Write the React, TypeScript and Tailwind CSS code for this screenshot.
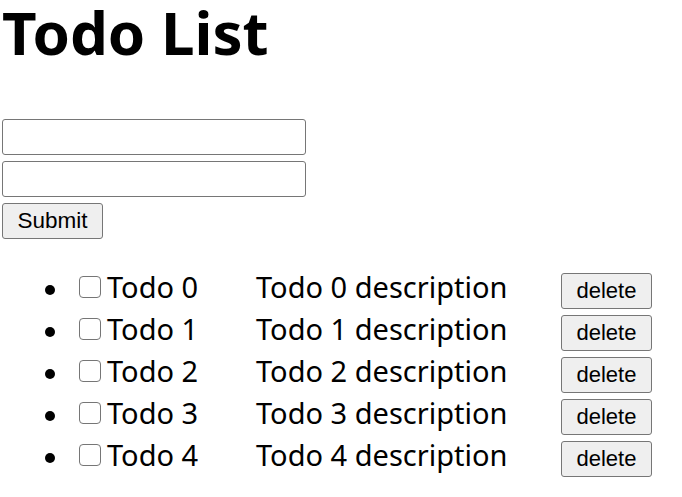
import { useState } from "react"

interface Todo {
  id: number
  title: string
  description: string
  done: boolean
}

const initialTodos: Todo[] = [0, 1, 2, 3, 4].map((i) => ({
  id: i,
  title: `Todo ${i}`,
  description: `Todo ${i} description`,
  done: false,
}))

export default function App() {
  const [todos, setTodos] = useState<Todo[]>(initialTodos)
  const [title, setTitle] = useState("")
  const [description, setDescription] = useState("")

  const handleSubmit = (e: React.FormEvent) => {
    e.preventDefault()
    if (!title) return
    setTodos([...todos, { id: Date.now(), title, description, done: false }])
    setTitle("")
    setDescription("")
  }

  const toggle = (id: number) => {
    setTodos(todos.map((t) => (t.id === id ? { ...t, done: !t.done } : t)))
  }

  const remove = (id: number) => {
    setTodos(todos.filter((t) => t.id !== id))
  }

  return (
    <div className="min-h-screen bg-white pl-[2px] text-black font-['Noto_Sans',sans-serif]">
      <h1 className="text-[60px] leading-[82px] font-bold -mt-[9px] h-[73px]">Todo List</h1>

      <form onSubmit={handleSubmit} className="mt-[55px] flex flex-col items-start gap-[6px]">
        <input
          value={title}
          onChange={(e) => setTitle(e.target.value)}
          className="h-[36px] w-[304px] rounded-[3px] border border-[#767676] bg-white px-[3px] text-[22px] outline-none"
        />
        <input
          value={description}
          onChange={(e) => setDescription(e.target.value)}
          className="h-[36px] w-[304px] rounded-[3px] border border-[#767676] bg-white px-[3px] text-[22px] outline-none"
        />
        <button
          type="submit"
          className="h-[36px] w-[101px] rounded-[3px] border border-[#767676] bg-[#efefef] text-[22.5px] leading-none font-['Liberation_Sans',Arial,sans-serif]"
        >
          Submit
        </button>
      </form>

      <ul className="mt-[31px] pl-[43px]">
        {todos.map((todo) => (
          <li key={todo.id} className="flex h-[42px] items-start">
            <span className="mt-[15px] h-[10px] w-[10px] rounded-full bg-black" />
            <input
              type="checkbox"
              checked={todo.done}
              onChange={() => toggle(todo.id)}
              className="ml-[24px] mt-[6px] h-[22px] w-[22px] appearance-none rounded-[4px] border-[1.5px] border-[#767676] bg-white checked:bg-[#0075ff]"
            />
            <span className="ml-[6px] mt-[2px] w-[149px] text-[29px] leading-[29px]">{todo.title}</span>
            <span className="mt-[2px] w-[305px] text-[29px] leading-[29px]">{todo.description}</span>
            <button
              onClick={() => remove(todo.id)}
              className="mt-[3px] h-[36px] w-[91px] rounded-[3px] border border-[#767676] bg-[#efefef] text-[22px] leading-none font-['Liberation_Sans',Arial,sans-serif]"
            >
              delete
            </button>
          </li>
        ))}
      </ul>
    </div>
  )
}
